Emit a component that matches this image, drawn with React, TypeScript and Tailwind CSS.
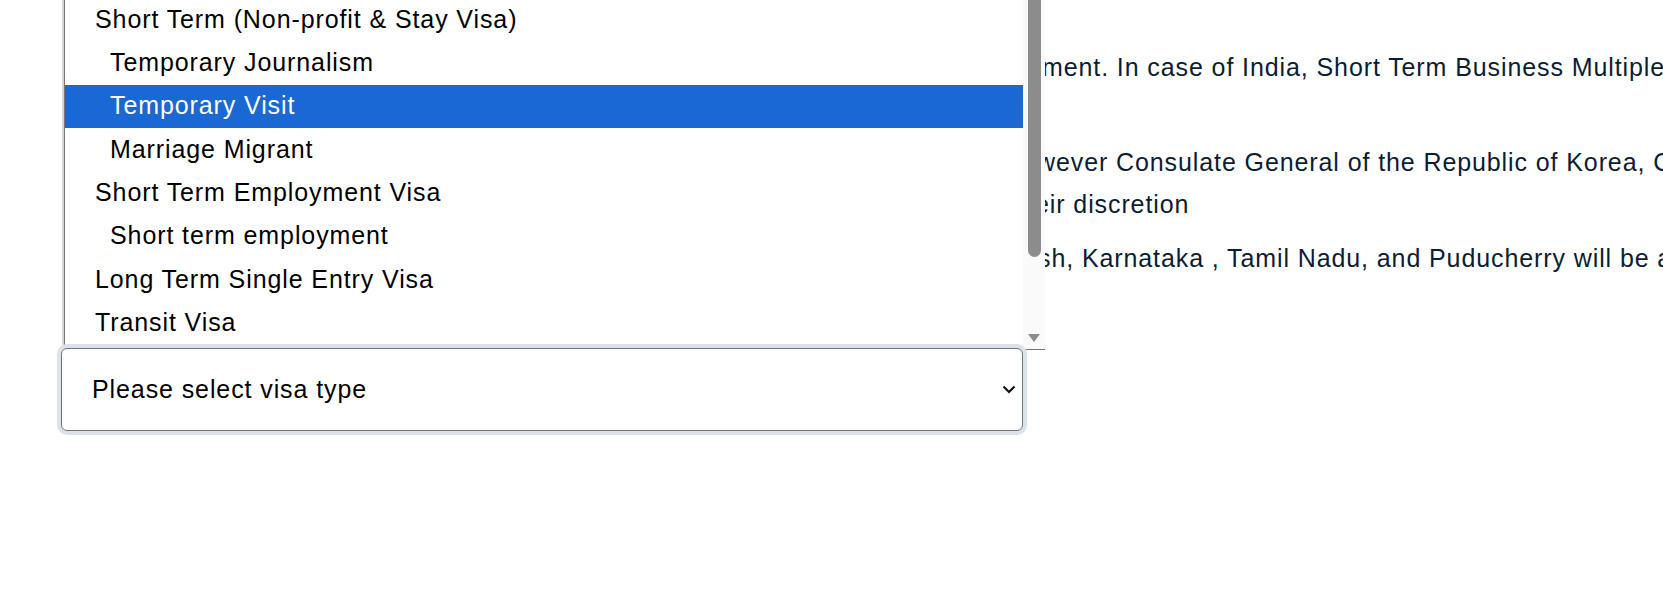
const options: { label: string; indent: boolean; selected?: boolean }[] = [
  { label: "Short Term (Non-profit & Stay Visa)", indent: false },
  { label: "Temporary Journalism", indent: true },
  { label: "Temporary Visit", indent: true, selected: true },
  { label: "Marriage Migrant", indent: true },
  { label: "Short Term Employment Visa", indent: false },
  { label: "Short term employment", indent: true },
  { label: "Long Term Single Entry Visa", indent: false },
  { label: "Transit Visa", indent: false },
];

function OptionList() {
  return (
    <div className="ml-[2px] h-[350px] flex border-l border-b border-[#767676] shadow-[-2px_0_0_#d6d6d6] bg-white overflow-hidden">
      <div className="flex-1 flex flex-col -mt-[2px]">
        {options.map((o) => (
          <div
            key={o.label}
            className={
              "h-[43.3px] shrink-0 flex items-center whitespace-nowrap " +
              (o.indent ? "pl-[45px] " : "pl-[30px] ") +
              (o.selected ? "bg-[#1a68d4] text-white" : "text-black")
            }
          >
            {o.label}
          </div>
        ))}
      </div>
      <div className="w-[22px] shrink-0 bg-[#fafafa] flex flex-col items-center">
        <div className="w-[13px] h-[257px] bg-[#8c8c8c] rounded-b-full"></div>
        <div className="flex-1"></div>
        <svg width="14" height="10" viewBox="0 0 14 10" className="mb-[6px]">
          <polygon points="1,1 13,1 7,9" fill="#8c8c8c" />
        </svg>
      </div>
    </div>
  );
}

function VisaSelect() {
  return (
    <div className="-ml-[1px] -mt-[2px] w-[962px] h-[83px] rounded-md border border-[#6f777f] shadow-[0_0_0_4px_#dbe2e9] bg-white flex items-center justify-between pl-[30px] pr-[6px] text-black">
      <span>Please select visa type</span>
      <svg width="14" height="9" viewBox="0 0 14 9">
        <polyline points="1.5,1.5 7,7 12.5,1.5" fill="none" stroke="#111" strokeWidth="2.2" />
      </svg>
    </div>
  );
}

export default function App() {
  return (
    <div className="h-[596px] w-full overflow-hidden bg-white flex font-['Liberation_Sans',Arial,sans-serif] text-[25px] tracking-[0.9px]">
      <div className="w-[1045px] shrink-0 pl-[62px] flex flex-col relative z-10">
        <OptionList />
        <VisaSelect />
      </div>
      <div className="flex-1 min-w-0 overflow-hidden whitespace-nowrap text-[#0b1d33] leading-[42px] pt-[46px]">
        <p className="-ml-[3px]">ment. In case of India, Short Term Business Multiple Entry Visa is issued</p>
        <p className="mt-[53px] -ml-[8px]">wever Consulate General of the Republic of Korea, Chennai may issue</p>
        <p className="-ml-[10px]">eir discretion</p>
        <p className="mt-[12px] -ml-[7px]">sh, Karnataka , Tamil Nadu, and Puducherry will be accepted</p>
      </div>
    </div>
  );
}
